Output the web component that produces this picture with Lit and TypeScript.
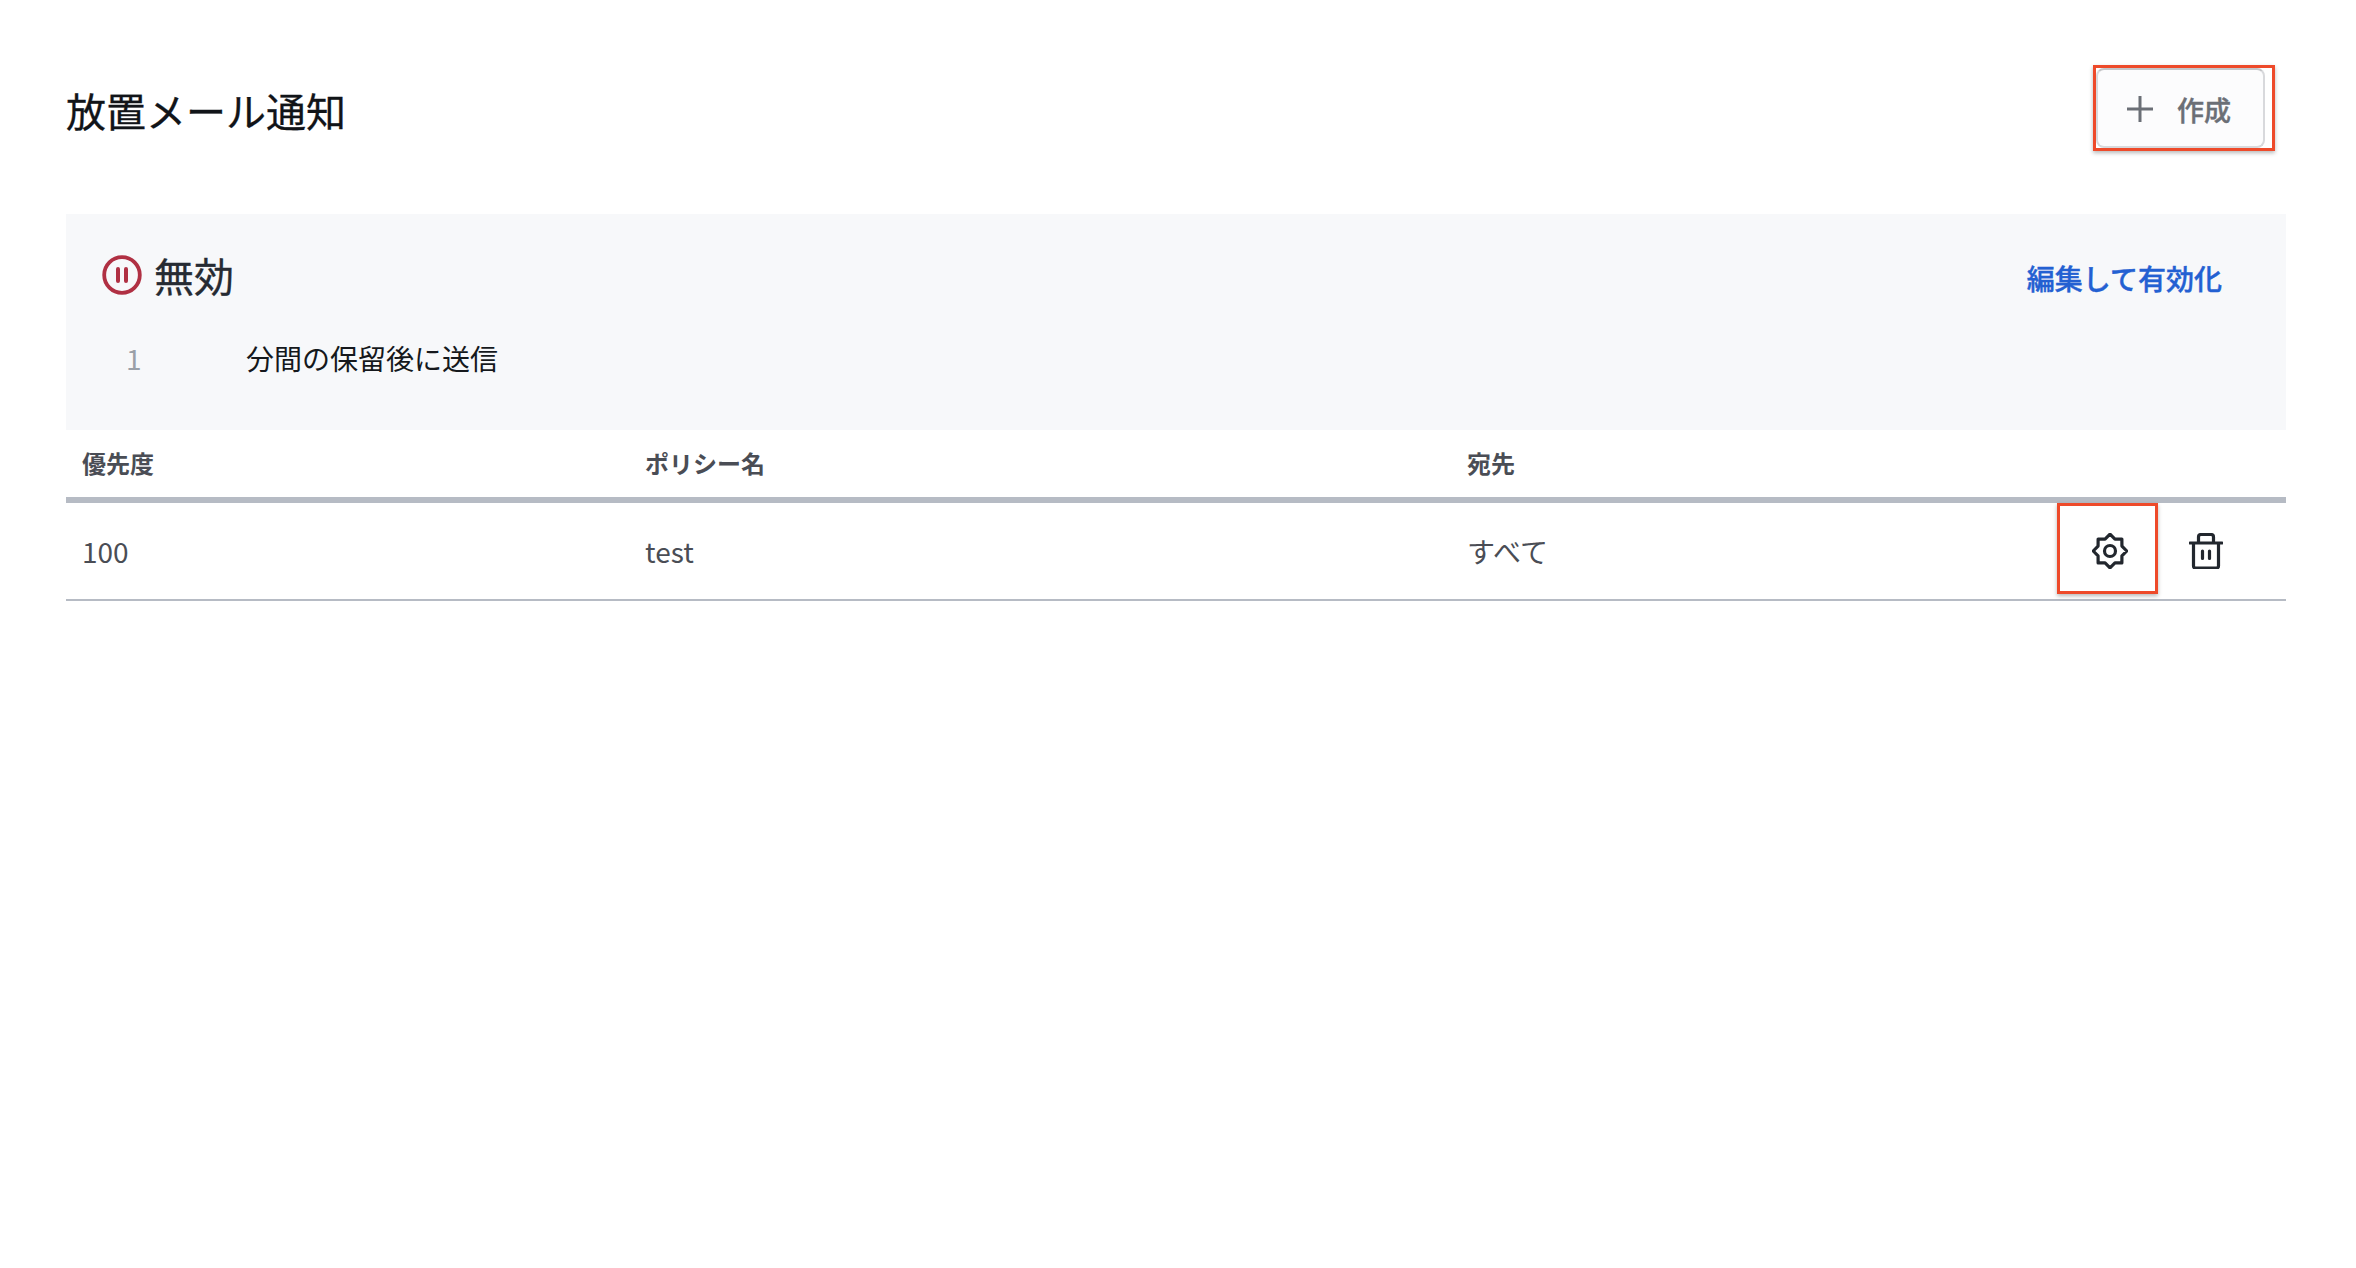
import { LitElement, html, css } from "lit";
import { customElement } from "lit/decorators.js";

const starPoints = (() => {
  const pts: string[] = [];
  for (let i = 0; i < 16; i++) {
    const r = i % 2 === 0 ? 16.8 : 12.9;
    const a = (i * Math.PI) / 8 - Math.PI / 2;
    pts.push(`${(18 + r * Math.cos(a)).toFixed(2)},${(18 + r * Math.sin(a)).toFixed(2)}`);
  }
  return pts.join(" ");
})();

@customElement("app-root")
export class AppRoot extends LitElement {
  static styles = css`
    :host {
      display: block;
      min-height: 1268px;
      box-sizing: border-box;
      padding: 65px 70px 0 66px;
      background: #fff;
      font-family: "Noto Sans CJK JP", "Noto Sans", sans-serif;
      color: #4a4d55;
    }
    .top {
      display: flex;
      justify-content: space-between;
      align-items: center;
      height: 86px;
      margin-bottom: 63px;
      padding-right: 11px;
    }
    h1 {
      margin: 3px 0 0;
      font-size: 40px;
      line-height: 56px;
      font-weight: 400;
      color: #111418;
      -webkit-text-stroke: 0.3px #111418;
    }
    .create-wrap {
      position: relative;
      width: 182px;
      height: 86px;
      box-sizing: border-box;
      padding: 3px 10px 3px 3px;
    }
    .create {
      display: flex;
      align-items: center;
      gap: 24px;
      box-sizing: border-box;
      width: 100%;
      height: 100%;
      padding: 2px 0 0 29px;
      border: 2px solid #d8d9dc;
      border-top-color: #c4c5c8;
      border-radius: 8px;
      background: #fcfcfd;
      color: #6b6f76;
      font: 500 27px/1 "Noto Sans CJK JP", sans-serif;
      -webkit-text-stroke: 0.4px #6b6f76;
    }
    .create svg { display: block; }
    .mark {
      position: absolute;
      inset: 0;
      border: 3px solid #ee4a2a;
      box-shadow: 0 2px 4px rgba(0, 0, 0, 0.28);
      pointer-events: none;
    }
    .panel {
      height: 216px;
      box-sizing: border-box;
      background: #f7f8fa;
      padding: 38px 64px 0 36px;
    }
    .status {
      display: flex;
      align-items: center;
      height: 46px;
    }
    .status svg { display: block; margin-right: 12px; }
    .status strong {
      font-size: 40px;
      line-height: 46px;
      font-weight: 400;
      color: #262b33;
      -webkit-text-stroke: 0.3px #262b33;
    }
    .link {
      margin: 6px 0 0 auto;
      color: #2360d2;
      font-size: 28px;
      font-weight: 500;
      line-height: 40px;
      text-decoration: none;
      -webkit-text-stroke: 0.4px #2360d2;
    }
    .delay {
      display: flex;
      align-items: center;
      margin-top: 40px;
      font-size: 28px;
      line-height: 40px;
      color: #15181c;
    }
    .delay .n {
      width: 144px;
      padding-left: 24px;
      box-sizing: border-box;
      color: #9aa0a8;
    }
    .grid {
      display: grid;
      grid-template-columns: 562px 823px 1fr 229px;
      align-items: center;
    }
    .head {
      height: 73px;
      box-sizing: border-box;
      border-bottom: 6px solid #b6bbc4;
      font-size: 24px;
      font-weight: 700;
      color: #4a4d55;
      padding-bottom: 3px;
    }
    .row {
      height: 98px;
      box-sizing: border-box;
      border-bottom: 2px solid #b6bbc4;
      font-size: 28px;
    }
    .cell { padding-left: 16px; }
    .cell + .cell { padding-left: 17px; }
    .cell + .cell + .cell { padding-left: 16px; }
    .actions {
      display: flex;
      align-items: flex-start;
      align-self: start;
    }
    .gear-wrap {
      position: relative;
      display: flex;
      align-items: center;
      justify-content: center;
      box-sizing: border-box;
      width: 101px;
      height: 91px;
      padding: 5px 0 0 5px;
    }
    .actions svg { display: block; }
    .trash { margin: 30px 0 0 31px; }
  `;

  render() {
    return html`
      <div class="top">
        <h1>放置メール通知</h1>
        <div class="create-wrap">
          <div class="create">
            <svg width="26" height="26" viewBox="0 0 26 26"><path d="M13 0v26M0 13h26" stroke="#6b6f76" stroke-width="3" fill="none"/></svg>
            <span>作成</span>
          </div>
          <div class="mark"></div>
        </div>
      </div>
      <section class="panel">
        <div class="status">
          <svg width="40" height="40" viewBox="0 0 40 40">
            <circle cx="20" cy="20" r="17.8" fill="none" stroke="#b03043" stroke-width="3.8"/>
            <path d="M16 14v12M24 14v12" stroke="#b03043" stroke-width="4" stroke-linecap="round"/>
          </svg>
          <strong>無効</strong>
          <a class="link" href="#">編集して有効化</a>
        </div>
        <div class="delay"><span class="n">1</span><span>分間の保留後に送信</span></div>
      </section>
      <div class="grid head">
        <div class="cell">優先度</div>
        <div class="cell">ポリシー名</div>
        <div class="cell">宛先</div>
        <div></div>
      </div>
      <div class="grid row">
        <div class="cell">100</div>
        <div class="cell">test</div>
        <div class="cell">すべて</div>
        <div class="actions">
          <div class="gear-wrap">
            <svg width="36" height="36" viewBox="0 0 36 36">
              <polygon points=${starPoints} fill="none" stroke="#22272e" stroke-width="3.2" stroke-linejoin="round"/>
              <circle cx="18" cy="18" r="5.500" fill="none" stroke="#22272e" stroke-width="3.2"/>
            </svg>
            <div class="mark"></div>
          </div>
          <svg class="trash" width="34" height="36" viewBox="0 0 34 36">
            <path d="M1 10h32M4.500 10v23a2 2 0 0 0 2 2h21a2 2 0 0 0 2-2V10M9.500 10V4a2.500 2.500 0 0 1 2.500-2.500h10a2.500 2.500 0 0 1 2.500 2.500v6M13.500 18v7.500M20.500 18v7.500" fill="none" stroke="#22272e" stroke-width="3.2" stroke-linecap="round" stroke-linejoin="round"/>
          </svg>
        </div>
      </div>
    `;
  }
}
